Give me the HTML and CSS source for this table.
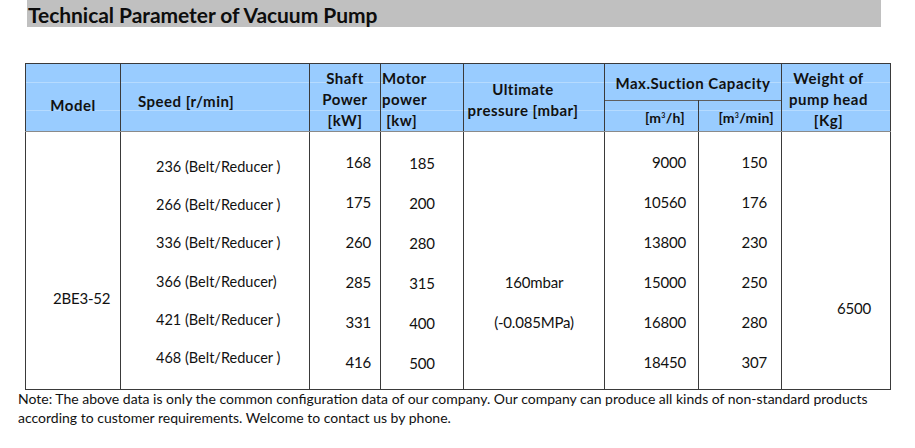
FILE: index.html
```html
<!DOCTYPE html>
<html lang="en">
<head>
<meta charset="utf-8">
<title>Technical Parameter of Vacuum Pump</title>
<link rel="stylesheet" href="styles.css">
</head>
<body>
<div class="page">
  <h1 class="title">Technical Parameter of Vacuum Pump</h1>
  <table class="spec">
    <colgroup>
      <col class="w-model">
      <col class="w-speed">
      <col class="w-shaft">
      <col class="w-motor">
      <col class="w-ult">
      <col class="w-cap-h">
      <col class="w-cap-min">
      <col class="w-weight">
    </colgroup>
    <thead>
      <tr class="hr1">
        <th rowspan="2" class="h-model">Model</th>
        <th rowspan="2" class="h-speed">Speed [r/min]</th>
        <th rowspan="2" class="h-shaft">Shaft<br>Power<br>[kW]</th>
        <th rowspan="2" class="h-motor">Motor<br>power<br>&nbsp;[kw]</th>
        <th rowspan="2" class="h-ult">Ultimate<br>pressure [mbar]</th>
        <th colspan="2" class="h-cap">Max.Suction Capacity</th>
        <th rowspan="2" class="h-weight">Weight of<br>pump head<br>[Kg]</th>
      </tr>
      <tr class="hr2">
        <th class="h-unit-h">[m<sup>3</sup>/h]</th>
        <th class="h-unit-min">[m<sup>3</sup>/min]</th>
      </tr>
    </thead>
    <tbody>
      <tr class="br">
        <td class="c-model"><div class="stack stack-model"><span>2BE3-52</span></div></td>
        <td class="c-speed">
          <div class="stack stack-speed">
            <span>236 (Belt/Reducer )</span>
            <span>266 (Belt/Reducer )</span>
            <span>336 (Belt/Reducer )</span>
            <span>366 (Belt/Reducer)</span>
            <span>421 (Belt/Reducer )</span>
            <span>468 (Belt/Reducer )</span>
          </div>
        </td>
        <td class="c-shaft">
          <div class="stack stack-rows">
            <span>168</span><span>175</span><span>260</span><span>285</span><span>331</span><span>416</span>
          </div>
        </td>
        <td class="c-motor">
          <div class="stack stack-rows stack-motor">
            <span>185</span><span>200</span><span>280</span><span>315</span><span>400</span><span>500</span>
          </div>
        </td>
        <td class="c-ult">
          <div class="stack stack-ult">
            <span>160mbar</span><span>(-0.085MPa)</span>
          </div>
        </td>
        <td class="c-cap-h">
          <div class="stack stack-rows">
            <span>9000</span><span>10560</span><span>13800</span><span>15000</span><span>16800</span><span>18450</span>
          </div>
        </td>
        <td class="c-cap-min">
          <div class="stack stack-rows">
            <span>150</span><span>176</span><span>230</span><span>250</span><span>280</span><span>307</span>
          </div>
        </td>
        <td class="c-weight"><div class="stack stack-weight"><span>6500</span></div></td>
      </tr>
    </tbody>
  </table>
  <p class="note">Note: The above data is only the common configuration data of our company. Our company can produce all kinds of non-standard products according to customer requirements. Welcome to contact us by phone.</p>
</div>
</body>
</html>
```
FILE: styles.css
```css
html, body {
  margin: 0;
  padding: 0;
  background: #ffffff;
}

body {
  font-family: Lato, "Open Sans", "Liberation Sans", sans-serif;
  color: #111111;
}

.page {
  width: 915px;
  height: 448px;
  overflow: hidden;
}

.title {
  margin: 0 0 0 27px;
  width: 854px;
  height: 27px;
  background: #c0c0c0;
  font-size: 21px;
  font-weight: 700;
  line-height: 30px;
  letter-spacing: -0.05px;
  padding-left: 1px;
  box-sizing: border-box;
  color: #0d0d0d;
  white-space: nowrap;
}

.spec {
  margin: 36px 0 0 25px;
  border-collapse: collapse;
  table-layout: fixed;
  width: 865px;
  border: 1.5px solid #3a3a3a;
}

.w-model { width: 95px; }
.w-speed { width: 189px; }
.w-shaft { width: 71px; }
.w-motor { width: 83px; }
.w-ult { width: 141px; }
.w-cap-h { width: 94px; }
.w-cap-min { width: 83px; }
.w-weight { width: 109px; }

.spec thead {
  background-color: #99ccff;
  background-image:
    linear-gradient(#b6dbff, #b6dbff),
    linear-gradient(#b6dbff, #b6dbff);
  background-size: 100% 1px, 100% 1px;
  background-position: 0 18px, 0 46px;
  background-repeat: no-repeat;
}

.spec th {
  font-size: 15px;
  font-weight: 700;
  letter-spacing: 0.5px;
  line-height: 21px;
  color: #111111;
  border-left: 1.5px solid #3a3a3a;
  border-right: 1.5px solid #3a3a3a;
  padding: 3px 0 0 0;
  vertical-align: middle;
  white-space: nowrap;
}

.hr1 { height: 37px; }
.hr2 { height: 31px; }

.spec thead tr.hr2 th {
  border-top: 1.5px solid #5f5f5f;
  border-bottom: 1.5px solid #8a8a8a;
}

.spec thead th[rowspan] {
  border-bottom: 1.5px solid #8a8a8a;
}

.spec th.h-model { text-align: center; padding-top: 15px; }
.spec th.h-speed { text-align: left; padding-left: 17px; padding-top: 7px; }
.spec th.h-shaft { text-align: center; }
.spec th.h-motor { text-align: left; padding-left: 1px; }
.spec th.h-ult { text-align: center; padding-right: 22px; padding-top: 5px; }
.spec th.h-cap { text-align: center; padding-top: 2px; }
.spec th.h-unit-h { text-align: right; padding-right: 13px; padding-top: 2px; font-size: 14px; letter-spacing: 0.3px; }
.spec th.h-unit-min { text-align: right; padding-right: 7px; padding-top: 2px; font-size: 14px; letter-spacing: 0.3px; border-left: 1.5px solid #8a8a8a; }
.spec th.h-weight { text-align: center; padding-right: 15px; }

.spec sup {
  font-size: 7px;
  line-height: 0;
  vertical-align: 5px;
}

.br { height: 258px; }

.spec td {
  padding: 0;
  vertical-align: top;
  border-left: 1.5px solid #3a3a3a;
  border-right: 1.5px solid #3a3a3a;
  font-size: 15px;
  letter-spacing: -0.2px;
  white-space: nowrap;
}

.spec td.c-cap-min { border-left: 1.5px solid #8c8c8c; }

.stack {
  display: flex;
  flex-direction: column;
  line-height: 20px;
}

.stack-rows {
  padding-top: 20px;
  gap: 20px;
}

.stack-motor { padding-top: 21px; }

.stack-speed {
  padding-top: 25px;
  gap: 18.2px;
  font-size: 14.5px;
  letter-spacing: 0;
}

.stack-ult {
  padding-top: 140px;
  gap: 20px;
  align-items: center;
}

.stack-model { padding-top: 156px; }
.stack-weight { padding-top: 166px; }

.spec td.c-model { text-align: left; padding-left: 27px; }
.spec td.c-speed { text-align: left; padding-left: 35px; }
.spec td.c-shaft { text-align: right; padding-right: 9px; }
.spec td.c-motor { text-align: center; }
.spec td.c-ult { text-align: center; }
.spec td.c-cap-h { text-align: right; padding-right: 12px; }
.spec td.c-cap-min { text-align: right; padding-right: 14px; }
.spec td.c-weight { text-align: right; padding-right: 19px; }

.note {
  margin: -1px 0 0 18px;
  width: 880px;
  font-size: 14px;
  line-height: 19px;
  letter-spacing: 0;
  color: #111111;
}
```
